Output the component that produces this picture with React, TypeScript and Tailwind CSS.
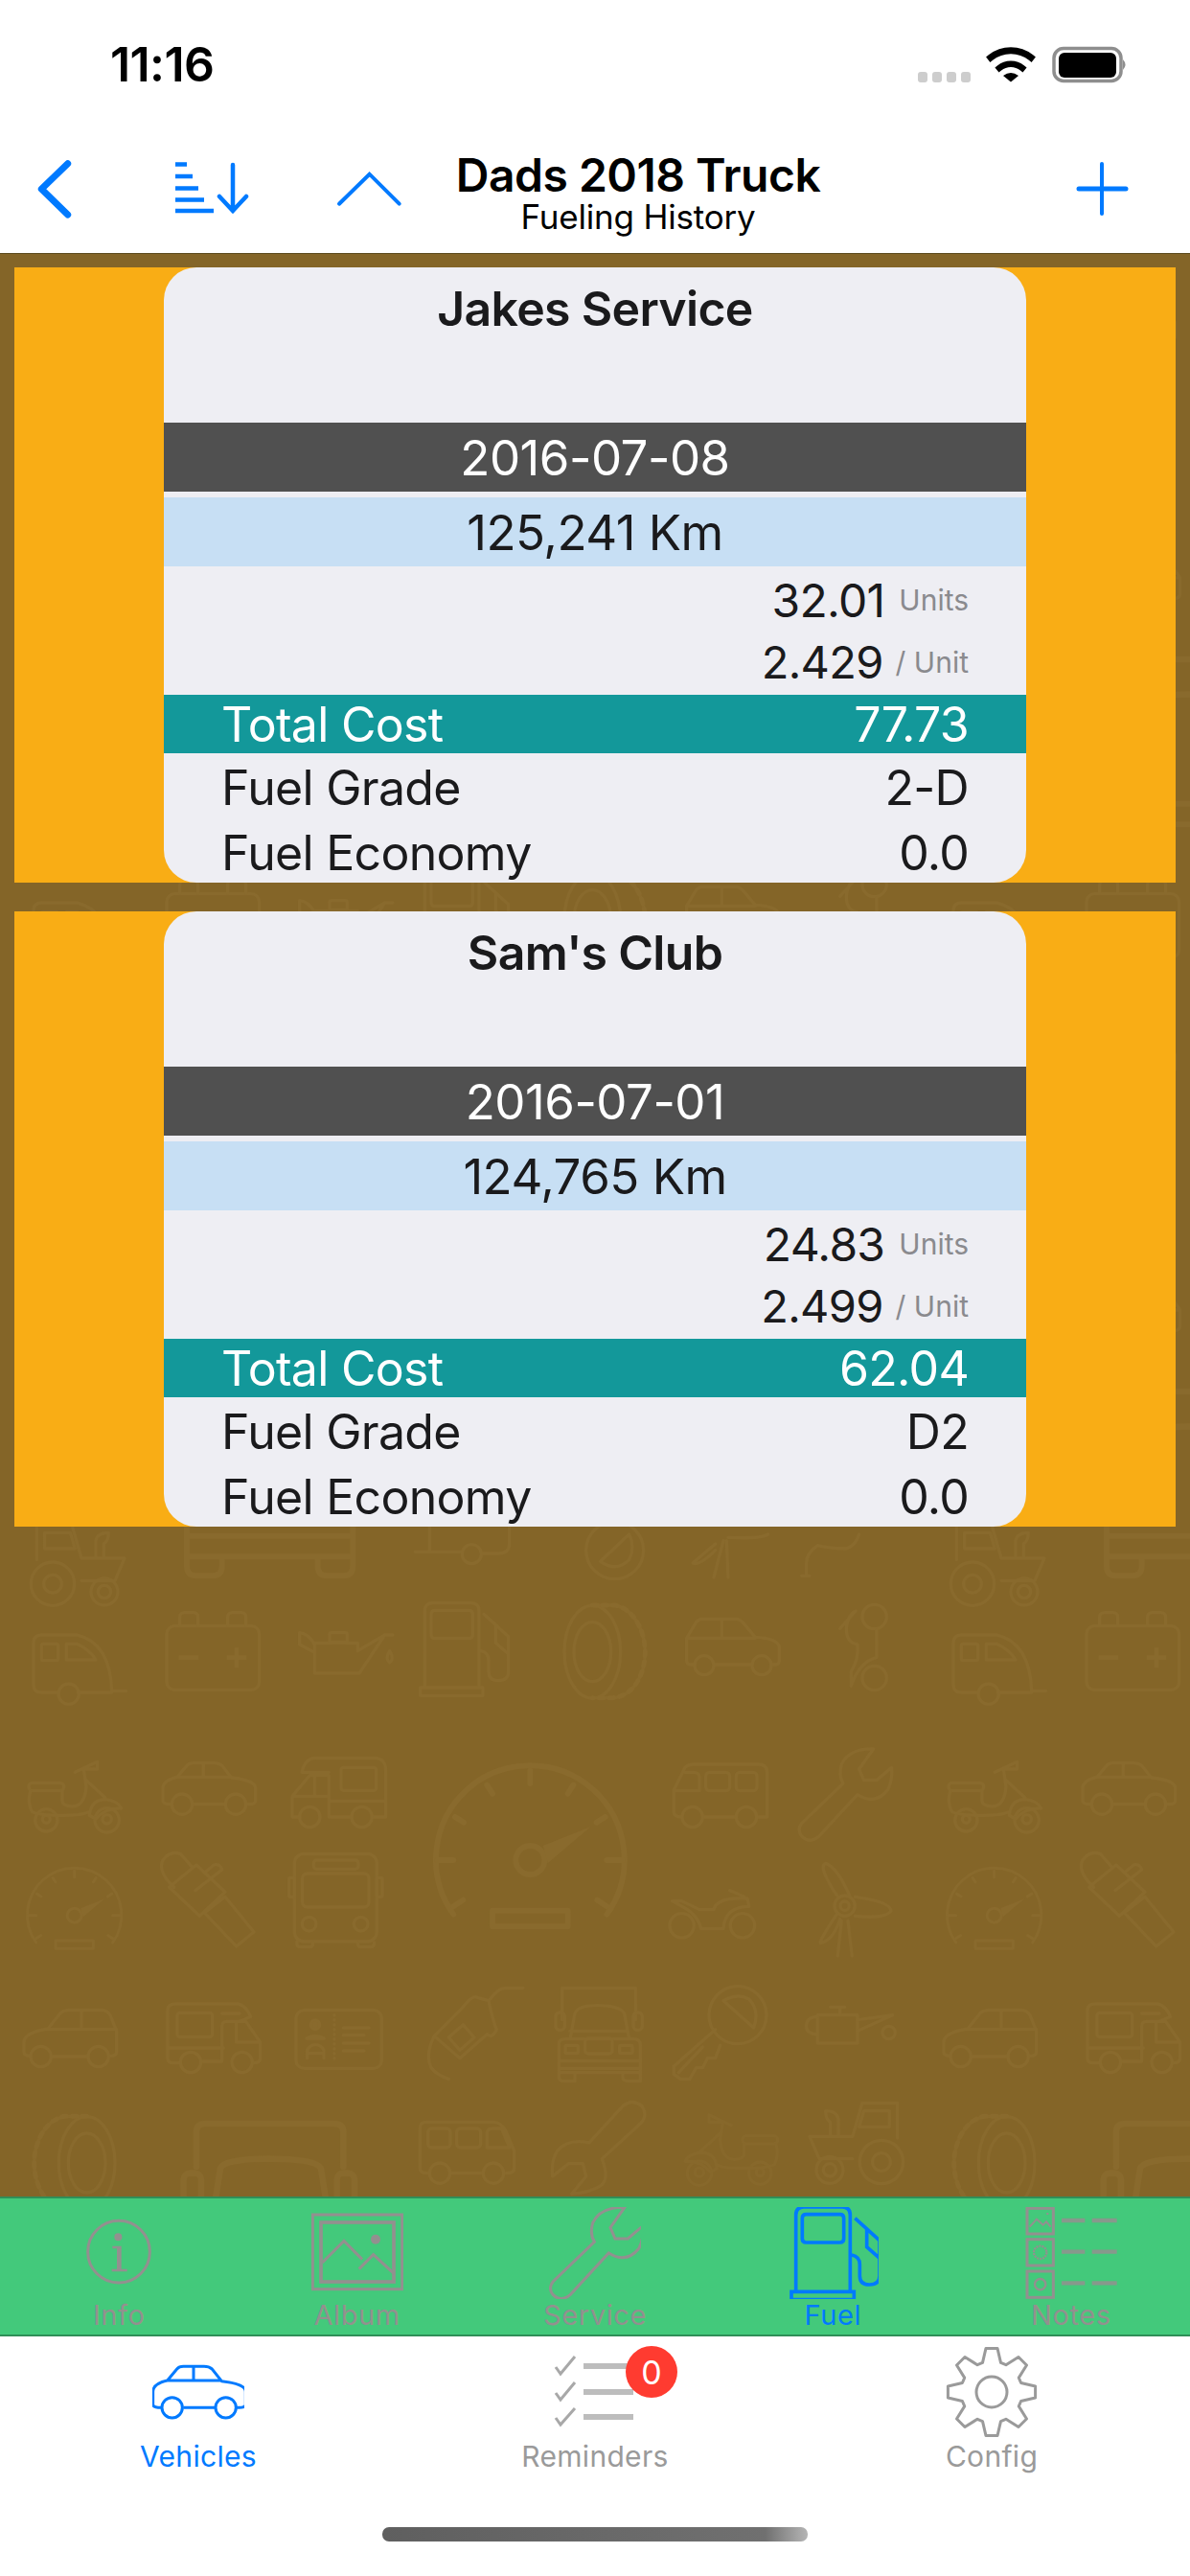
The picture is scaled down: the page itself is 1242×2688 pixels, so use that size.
const WRENCH =
  "M1320 780L1190 905Q1175 925 1190 945Q1215 970 1245 945L1365 815Q1420 850 1460 800Q1475 770 1472 730L1425 770H1385L1370 735L1415 672Q1340 670 1315 720Q1305 755 1320 780Z";

const PUMP =
  "M10 480V240Q10 215 35 215H155Q180 215 180 240V480M42 238H148Q160 238 160 250V314Q160 326 148 326H42Q30 326 30 314V250Q30 238 42 238ZM-4 480H192V505H-4ZM195 250L272 320V430Q272 458 240 458Q210 458 210 430V395Q210 370 185 365M232 285V340L272 375";

const CAR =
  "M555 760L585 724Q592 716 605 716H670Q685 716 695 724L725 762Q800 770 800 795V835Q800 845 780 845H770M555 760Q510 770 510 795V835Q510 845 535 845M605 845H705M555 760H725M637 720V760";

const GAUGE = (
  <>
    <path d="M-240 170A295 295 0 1 1 240 170" />
    <path d="M0 -280V-240M-135 -235L-118 -208M135 -235L118 -208M-235 -135L-208 -118M235 -135L208 -118M-290 0H-240M290 0H240M-240 145L-210 125M240 145L210 125" />
    <circle cx="0" cy="0" r="45" />
    <path d="M40 -45L190 -105L55 10Z" fill="#896a2d" stroke="none" />
    <rect x="-118" y="158" width="236" height="50" />
  </>
);

const TIRE = (
  <>
    <ellipse cx="535" cy="368" rx="88" ry="145" />
    <ellipse cx="535" cy="368" rx="58" ry="93" />
    <path d="M535 222H605C670 235 700 310 700 368C700 430 670 505 600 512H535" />
    <path d="M535 222H605C670 235 700 310 700 368C700 430 670 505 600 512H535" strokeDasharray="14 18" strokeWidth="15" />
  </>
);

const SCOOTER = (
  <>
    <circle cx="145" cy="895" r="35" />
    <circle cx="145" cy="892" r="12" />
    <circle cx="335" cy="895" r="38" />
    <circle cx="335" cy="892" r="14" />
    <rect x="90" y="778" width="110" height="25" rx="12" />
    <path d="M95 805Q85 840 100 868Q120 880 200 880Q260 880 275 870M195 805V835Q195 850 225 852Q265 852 270 790L262 735M235 745L305 712V735L262 735M270 770L330 825M280 880Q285 830 330 830Q370 835 380 858Q330 855 300 892Z" />
  </>
);

// tractor is written where it sits in the bottom row, top row is its mirror
const TRACTOR = (
  <>
    <circle cx="1440" cy="615" r="68" />
    <circle cx="1440" cy="615" r="28" />
    <circle cx="1278" cy="640" r="42" />
    <circle cx="1278" cy="640" r="20" />
    <path d="M1215 535H1350L1380 430H1490V540M1385 455H1465V505H1370ZM1215 535L1245 605H1350M1305 535V480Q1300 455 1265 455Q1265 480 1280 490V535" />
  </>
);

function BgTile() {
  return (
    <g fill="none" stroke="#896a2d" strokeWidth="10" strokeLinecap="round" strokeLinejoin="round">
      {/* left part of the top rows */}
      <g transform="translate(0 1600) scale(0.3333)">
        <g transform="translate(1605 -460) scale(-1 1)">{TRACTOR}</g>
        <path d="M585 -30V100Q585 130 615 130H665Q695 130 695 100V70M590 5H1100M590 70H1100M1105 -30V100Q1105 130 1075 130H1025Q995 130 995 100V70" strokeWidth="18" />
        <path d="M105 340Q105 315 130 315H240Q345 340 350 490H395M105 340V470Q105 495 130 495H185M245 495H350M208 343H240Q280 360 300 393H208Z" />
        <circle cx="215" cy="500" r="32" />
        <rect x="130" y="343" width="52" height="52" rx="6" />
        <rect x="522" y="287" width="290" height="200" rx="25" />
        <path d="M563 285V260Q563 245 578 245H605Q620 245 620 260V285M713 285V260Q713 245 728 245H755Q770 245 770 260V285" />
        <path d="M560 386H622M710 386H772M741 355V418" strokeWidth="14" strokeLinecap="butt" />
        <path d="M985 340H1120V365L1205 315H1230M985 345V435H1125L1205 315M985 345Q965 310 938 308V345L985 370" />
        <rect x="1032" y="308" width="55" height="30" rx="5" />
        <path d="M1220 365Q1205 390 1220 402Q1236 390 1220 365Z" />
        {SCOOTER}
        <path d={CAR} />
        <circle cx="570" cy="845" r="32" />
        <circle cx="738" cy="845" r="32" />
        <path d="M945 745Q955 700 990 700H1170Q1208 700 1208 740V885H1165M1100 885H1035M915 885V820L970 755H1030V885M915 820H1030M985 755V815M1035 835H1208M945 745H1030M915 885H940" />
        <rect x="1068" y="730" width="110" height="72" rx="8" />
        <circle cx="970" cy="885" r="32" />
        <circle cx="1133" cy="885" r="32" />
        <g transform="translate(233 1193) scale(0.5)" strokeWidth="18">{GAUGE}</g>
        <path d="M530 1105L625 1195L705 1120L615 1035ZM600 1040L565 1000Q530 990 510 1020Q495 1050 530 1090L545 1105M612 1115L695 1050Q690 1030 670 1035L640 1060M640 1185L705 1135L795 1245L740 1290Z" />
        <rect x="922" y="1000" width="258" height="275" rx="30" />
        <rect x="982" y="1020" width="140" height="28" rx="10" />
        <rect x="947" y="1062" width="208" height="105" rx="15" />
        <circle cx="968" cy="1220" r="22" />
        <circle cx="1130" cy="1220" r="22" />
        <path d="M930 1275V1285Q930 1292 945 1292H970Q980 1292 980 1278M1120 1278Q1120 1292 1130 1292H1160Q1172 1292 1172 1278" />
        <rect x="905" y="1075" width="17" height="60" rx="4" />
        <rect x="1180" y="1075" width="17" height="60" rx="4" />
      </g>

      {/* middle part of the top rows */}
      <g transform="translate(440 1600) scale(0.3333)">
        <path d="M25 -30V55M-20 55H125M190 60H240Q275 60 275 30V-30" />
        <circle cx="157" cy="62" r="30" />
        <circle cx="605" cy="50" r="90" />
        <path d="M560 85L650 0Q670 40 650 80Q610 120 560 85Z" />
        <path d="M920 30Q860 80 850 90Q870 100 920 50M945 20L915 135M955 20L960 135M960 10Q1060 15 1085 0M1205 130V90Q1205 60 1240 35Q1280 45 1330 45Q1360 35 1370 0M1190 130H1215" />
        <path d={PUMP} />
        {TIRE}
        <path d="M830 325L860 275Q868 265 880 265H985Q995 265 1005 275L1045 322Q1110 325 1120 350V395Q1120 408 1105 408H1095M830 325V395Q830 408 845 408H855M915 408H1035M830 325H1045M940 265V322" />
        <circle cx="885" cy="410" r="30" />
        <circle cx="1065" cy="410" r="30" />
        <circle cx="1418" cy="258" r="38" />
        <circle cx="1418" cy="450" r="38" />
        <path d="M1425 300V385Q1370 400 1345 475V430Q1370 390 1365 345Q1330 340 1330 295Q1335 250 1360 240L1310 295" />
        <g transform="translate(340 1020)" strokeWidth="18">{GAUGE}</g>
        <path d="M790 800L825 730Q835 720 850 720H1055Q1082 720 1082 745V885H1055M790 800V870Q790 885 815 885M880 885H985M790 803H870V760Q870 745 850 745H825" />
        <rect x="890" y="745" width="75" height="58" rx="12" />
        <rect x="985" y="745" width="65" height="58" rx="12" />
        <circle cx="848" cy="885" r="32" />
        <circle cx="1017" cy="885" r="32" />
        <path d={WRENCH} />
        <circle cx="815" cy="1225" r="38" />
        <circle cx="1005" cy="1225" r="38" />
        <path d="M785 1148H815L870 1175H915Q925 1135 1020 1140L1025 1165Q950 1165 945 1235H875Q865 1190 815 1165ZM965 1115L1010 1135" />
        <circle cx="1325" cy="1163" r="32" />
        <circle cx="1325" cy="1163" r="14" />
        <path d="M1300 1130Q1240 1040 1265 1030Q1300 1040 1340 1130M1358 1135Q1470 1150 1470 1180Q1450 1205 1358 1195M1300 1190Q1240 1280 1250 1280Q1290 1270 1310 1205M1315 1210L1303 1320M1335 1210L1348 1320" />
      </g>

      {/* left part of the bottom rows */}
      <g transform="translate(0 2050) scale(0.3333)">
        <path d="M150 198L190 148Q200 140 215 140H320Q335 140 345 155L365 205V270Q365 283 345 283M150 198Q75 210 75 240V270Q75 283 95 283M160 285H275M150 200H365M255 140V198" />
        <circle cx="128" cy="285" r="32" />
        <circle cx="308" cy="285" r="32" />
        <path d="M525 140Q525 120 550 120H745Q770 125 785 160L750 175M695 150H750M525 258H700M525 140V290Q525 305 545 305H565M630 300H695V190Q695 175 710 175H770L815 240V290Q815 305 790 305M740 178V240H815" />
        <rect x="555" y="148" width="110" height="75" rx="8" />
        <circle cx="597" cy="303" r="32" />
        <circle cx="758" cy="303" r="32" />
        <rect x="927" y="140" width="268" height="182" rx="25" />
        <path d="M1047 155V305" strokeDasharray="1 14" />
        <path d="M1075 195H1155M1075 218H1140M1075 243H1155M1075 267H1140" />
        <circle cx="987" cy="185" r="14" fill="#896a2d" />
        <path d="M960 228Q985 212 1015 228ZM962 290V265Q970 248 988 248Q1006 248 1014 265V290M962 275H1014" />
        <g transform="translate(807 250) scale(-1 1)">{TIRE}</g>
        <path d="M615 630V520Q615 495 645 495H1045Q1075 495 1075 520V630M675 730L690 635Q700 605 840 605Q990 605 1005 635L1020 730" strokeWidth="20" />
        <rect x="575" y="650" width="55" height="100" rx="20" strokeWidth="20" />
        <rect x="1055" y="650" width="55" height="100" rx="20" strokeWidth="20" />
      </g>

      {/* middle part of the bottom rows */}
      <g transform="translate(440 2050) scale(0.3333)">
        <path d="M130 130L40 220Q10 280 30 320Q50 345 85 355M130 130Q160 90 175 100Q190 105 210 110Q225 180 235 200Q220 230 205 215L120 290L45 225M85 225L130 185L165 225L120 265ZM215 105Q240 70 265 70H318" />
        <path d="M440 170V70H670V170M465 230L480 150Q490 125 550 125Q620 125 635 150L650 230M465 205H645M430 245Q430 230 450 230H665Q685 230 685 250V335H430ZM430 298H685M430 322H685M430 335V350Q430 362 450 362H480V335M630 335V350Q630 362 650 362H685V335" />
        <rect x="420" y="147" width="28" height="55" rx="12" />
        <rect x="663" y="147" width="28" height="55" rx="12" />
        <rect x="512" y="228" width="85" height="48" rx="10" />
        <rect x="450" y="250" width="40" height="25" rx="4" />
        <rect x="620" y="250" width="40" height="25" rx="4" />
        <circle cx="990" cy="155" r="90" />
        <path d="M945 110L1040 195Q1060 140 1025 105Q990 85 945 110ZM920 200L790 315V340L810 355H840L860 320H880L895 290H920L935 250M805 335L880 255" />
        <rect x="1240" y="155" width="125" height="88" />
        <path d="M1240 160Q1205 160 1205 190Q1205 215 1240 215M1310 130V155M1280 130H1325M1365 170L1475 155L1365 205" />
        <circle cx="1463" cy="210" r="20" />
        <path d="M-5 510Q-5 490 15 490H225Q250 490 265 520L290 580V635Q290 650 265 650M-5 510V635Q-5 650 20 650M90 650H190M205 570V525Q205 510 225 510H250L275 570Z" />
        <rect x="20" y="510" width="70" height="60" rx="12" />
        <rect x="110" y="510" width="75" height="60" rx="12" />
        <circle cx="57" cy="650" r="32" />
        <circle cx="225" cy="650" r="32" />
        <path d="M525 555L630 440Q660 415 690 440Q710 470 685 495L565 605Q590 670 560 690Q530 710 470 715L515 660L505 620H460L410 660Q405 610 425 580Q460 540 525 555Z" />
        <g transform="translate(1205 -245) scale(-1 1)" opacity="0.6">{SCOOTER}</g>
        {TRACTOR}
      </g>
    </g>
  );
}

function Background() {
  return (
    <svg className="absolute inset-0" width="1242" height="2028" viewBox="0 264 1242 2028">
      <defs>
        <g id="tile"><BgTile /></g>
      </defs>
      <use href="#tile" />
      <use href="#tile" x="960" />
      <use href="#tile" y="-764" />
      <use href="#tile" x="960" y="-764" />
      <use href="#tile" y="-1528" />
      <use href="#tile" x="960" y="-1528" />
    </svg>
  );
}

function StatusBar() {
  return (
    <div className="h-[130px] pt-[5px] flex items-center">
      <span className="ml-[115px] text-[50px] font-semibold tracking-[-0.6px] text-black">11:16</span>
      <svg className="ml-auto mr-[62px]" width="222" height="45" viewBox="958 45 222 45">
        <rect x="958" y="75" width="10" height="11" rx="3" fill="#cdcdcd" />
        <rect x="973" y="75" width="10" height="11" rx="3" fill="#cdcdcd" />
        <rect x="988" y="75" width="10" height="11" rx="3" fill="#cdcdcd" />
        <rect x="1003" y="75" width="10" height="11" rx="3" fill="#cdcdcd" />
        <path d="M1034 60A34 34 0 0 1 1076 60" fill="none" stroke="#000" strokeWidth="7" strokeLinecap="square" />
        <path d="M1043 71A19 19 0 0 1 1067 71" fill="none" stroke="#000" strokeWidth="6.5" strokeLinecap="square" />
        <path d="M1047 79Q1055 73 1063 79L1055 85.5Z" fill="#000" />
        <rect x="1100" y="50.5" width="70" height="34" rx="10" fill="none" stroke="#8e8e8e" strokeWidth="3.5" />
        <rect x="1105" y="55" width="60" height="26" rx="6" fill="#000" />
        <path d="M1172 62Q1177 67.5 1172 73Z" fill="#8e8e8e" />
      </svg>
    </div>
  );
}

function NavBar() {
  return (
    <div className="h-[134px] flex items-center pl-[36px]">
      <svg width="42" height="66" viewBox="36 165 42 66" fill="none" stroke="#007aff" strokeWidth="7" strokeLinecap="round" strokeLinejoin="round">
        <path d="M70.7 171.7L43.3 198.3L70.7 225" />
      </svg>
      <svg className="ml-[105px]" width="78" height="62" viewBox="183 167 78 62" fill="none" stroke="#007aff">
        <path d="M183 172.5H195M183 185H201M183 197.5H207M183 209.5H213M183 221H223" strokeWidth="4.5" />
        <path d="M243 173V221M229 206L243 221L257 206" strokeWidth="4.5" strokeLinecap="round" />
      </svg>
      <svg className="ml-[89px]" width="70" height="40" viewBox="350 177 70 40" fill="none" stroke="#007aff" strokeWidth="4" strokeLinecap="round">
        <path d="M354 212.7L385.6 181.7L416.7 212.7" />
      </svg>
      <div className="ml-[26px] w-[440px] flex flex-col items-center text-black pt-[2px]">
        <span className="text-[48px] leading-[55px] font-semibold tracking-[-0.5px]">Dads 2018 Truck</span>
        <span className="text-[35px] leading-[32px] tracking-[-0.2px]">Fueling History</span>
      </div>
      <svg className="ml-[235px]" width="60" height="60" viewBox="1120 168 60 60" fill="none" stroke="#007aff" strokeLinecap="round">
        <path d="M1149 172V224" strokeWidth="4" />
        <path d="M1125 198H1174" strokeWidth="5" />
      </svg>
    </div>
  );
}

type Fill = {
  station: string;
  date: string;
  odometer: string;
  units: string;
  perUnit: string;
  total: string;
  grade: string;
  economy: string;
};

const fills: Fill[] = [
  { station: "Jakes Service", date: "2016-07-08", odometer: "125,241 Km", units: "32.01", perUnit: "2.429", total: "77.73", grade: "2-D", economy: "0.0" },
  { station: "Sam's Club", date: "2016-07-01", odometer: "124,765 Km", units: "24.83", perUnit: "2.499", total: "62.04", grade: "D2", economy: "0.0" },
];

function FillCard({ fill }: { fill: Fill }) {
  return (
    <div className="relative h-[642px] mx-[15px] px-[156px] bg-[#f9ad15]">
      <div className="h-full rounded-[34px] overflow-hidden bg-[#eeeef3] text-[#1a1a1c] text-[50px] tracking-[-0.7px] flex flex-col">
        <div className="h-[162px] pt-[4px] text-center font-semibold leading-[78px]">{fill.station}</div>
        <div className="h-[72px] shrink-0 pt-[2px] flex items-center justify-center bg-[#505050] text-white text-[51px] tracking-[-0.5px]">{fill.date}</div>
        <div className="h-[72px] shrink-0 mt-[6px] pt-[2px] flex items-center justify-center bg-[#c7dff4] text-[51px] tracking-[-0.5px]">{fill.odometer}</div>
        <div className="h-[67px] pt-[4px] px-[60px] flex items-center justify-end text-[48px]">
          {fill.units}
          <span className="ml-[15px] text-[30px] tracking-normal text-[#8a8a8e]">Units</span>
        </div>
        <div className="h-[67px] px-[60px] flex items-center justify-end text-[47px]">
          {fill.perUnit}
          <span className="ml-[13px] text-[30px] tracking-normal text-[#8a8a8e]">/ Unit</span>
        </div>
        <div className="h-[61px] pt-[1px] px-[60px] flex items-center justify-between bg-[#13989a] text-white">
          <span>Total Cost</span>
          <span>{fill.total}</span>
        </div>
        <div className="h-[67px] pt-[6px] px-[60px] flex items-center justify-between">
          <span>Fuel Grade</span>
          <span>{fill.grade}</span>
        </div>
        <div className="h-[68px] pt-[6px] px-[60px] flex items-center justify-between">
          <span>Fuel Economy</span>
          <span>{fill.economy}</span>
        </div>
      </div>
    </div>
  );
}

function SubTab({ label, active, children }: { label: string; active?: boolean; children: React.ReactNode }) {
  return (
    <div className={active ? "flex flex-col items-center text-[#007aff]" : "flex flex-col items-center text-[#93908f]"}>
      <svg width="96" height="96" viewBox="0 0 288 288" fill="none" stroke="currentColor" strokeWidth="9">
        {children}
      </svg>
      <span className="text-[29px] leading-[32px] mt-[1px] tracking-[0.6px]">{label}</span>
    </div>
  );
}

function SubTabs() {
  return (
    <div className="h-[146px] shrink-0 grid grid-cols-5 pt-[9px] bg-[#43c97b] border-y-2 border-y-[#2f8f58] box-border">
      <SubTab label="Info">
        <circle cx="144" cy="140" r="97" />
        <circle cx="142" cy="94" r="12" fill="currentColor" stroke="none" />
        <path d="M124 122H152V194H170V202H122V194H138V130H124Z" fill="currentColor" stroke="none" />
      </SubTab>
      <SubTab label="Album">
        <rect x="4" y="24" width="280" height="233" />
        <rect x="30" y="48" width="228" height="186" strokeWidth="11" />
        <path d="M34 174L102 106L159 164M149 194L194 149L259 209" />
        <circle cx="201" cy="101" r="15" fill="currentColor" stroke="none" />
      </SubTab>
      <SubTab label="Service">
        <path transform="translate(-1178 -671)" d={WRENCH} />
      </SubTab>
      <SubTab label="Fuel" active>
        <path transform="translate(19 -215)" d={PUMP} strokeWidth="11" />
      </SubTab>
      <SubTab label="Notes">
        <rect x="6" y="4" width="82" height="80" />
        <rect x="6" y="101" width="82" height="82" />
        <rect x="6" y="201" width="82" height="82" />
        <path d="M14 62L36 38L56 56L66 46L80 62M70 18V24" strokeWidth="6" />
        <circle cx="47" cy="142" r="20" strokeWidth="7" strokeDasharray="6 3" />
        <circle cx="47" cy="242" r="17" strokeWidth="7" />
        <path d="M114 42H187M209 42H287M114 140H187M209 140H287M114 238H187M209 238H287" strokeWidth="13" opacity="0.85" />
      </SubTab>
    </div>
  );
}

// 8 tooth cog for the Config tab
const gearPath = Array.from({ length: 8 }, (_, i) => {
  const a = (i * Math.PI) / 4 - Math.PI / 2;
  const pt = (r: number, d: number) => `${(48 + r * Math.cos(a + d)).toFixed(1)} ${(48 + r * Math.sin(a + d)).toFixed(1)}`;
  return `${i === 0 ? "M" : "L"}${pt(32, -0.3)}L${pt(46, -0.13)}L${pt(46, 0.13)}L${pt(32, 0.3)}`;
}).join("") + "Z";

function MainTabs() {
  return (
    <div className="grid grid-cols-3 pt-[10px]">
      <div className="flex flex-col items-center text-[#007aff]">
        <svg width="96" height="96" viewBox="0 0 288 288" fill="none" stroke="currentColor" strokeWidth="9">
          <g transform="translate(-508 -652)">
            <path d={CAR} />
            <circle cx="570" cy="845" r="32" />
            <circle cx="738" cy="845" r="32" />
          </g>
        </svg>
        <span className="text-[30px] leading-[34px] mt-[2px] tracking-[0.3px]">Vehicles</span>
      </div>
      <div className="relative flex flex-col items-center text-[#9a9a9a]">
        <svg width="96" height="96" viewBox="572 2448 96 96" fill="none">
          <path d="M579 2470L584 2477L599 2459M579 2497L584 2504L599 2486M579 2523L584 2530L599 2513" stroke="#a8a8a8" strokeWidth="3" />
          <path d="M608 2469H660M608 2496H660M608 2522H660" stroke="#bdbdbd" strokeWidth="6" />
        </svg>
        <span className="text-[30px] leading-[34px] mt-[2px] tracking-[0.3px]">Reminders</span>
        <span className="absolute left-[239px] top-0 w-[54px] h-[54px] rounded-full bg-[#ff3b30] text-white text-[34px] flex items-center justify-center">0</span>
      </div>
      <div className="flex flex-col items-center text-[#9a9a9a]">
        <svg width="96" height="96" viewBox="0 0 96 96" fill="none" stroke="currentColor" strokeWidth="3">
          <path d={gearPath} strokeLinejoin="round" />
          <circle cx="48" cy="48" r="16" />
        </svg>
        <span className="text-[30px] leading-[34px] mt-[2px] tracking-[0.3px]">Config</span>
      </div>
    </div>
  );
}

export default function App() {
  return (
    <div className="w-[1242px] h-[2688px] flex flex-col bg-white overflow-hidden font-['Inter',sans-serif]">
      <header className="h-[264px] shrink-0">
        <StatusBar />
        <NavBar />
      </header>
      <main className="relative flex-1 overflow-hidden bg-[#846528] border-t border-t-[#5c4a1e]">
        <Background />
        <div className="relative pt-[14px] flex flex-col gap-[30px]">
          {fills.map((fill) => (
            <FillCard key={fill.date} fill={fill} />
          ))}
        </div>
      </main>
      <SubTabs />
      <div className="h-[250px] shrink-0 flex flex-col">
        <MainTabs />
        <div className="w-[444px] h-[15px] mx-auto mt-[57px] rounded-[7px] bg-[linear-gradient(90deg,#5f5f5f,#707070_90%,#b5b5b5)]" />
      </div>
    </div>
  );
}
